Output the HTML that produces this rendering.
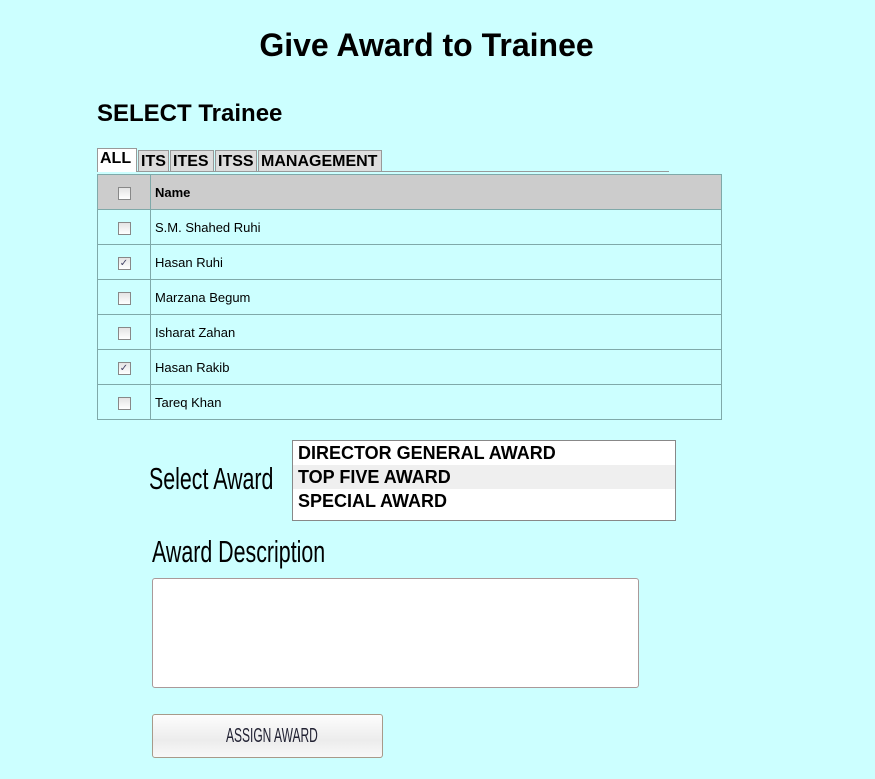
<!DOCTYPE html>
<html><head><style>
body{margin:0;background:#ccffff;font-family:"Liberation Sans",Arial,sans-serif;width:875px;height:779px;position:relative;overflow:hidden}
.abs{position:absolute}
h1{position:absolute;left:0;width:853px;text-align:center;top:27px;margin:0;font-size:32px;font-weight:bold}
h2{position:absolute;left:97px;top:100px;margin:0;font-size:24px}
.tabs{position:absolute;left:97px;top:148px;height:23px;width:572px;border-bottom:1px solid #999}
.tab{position:absolute;top:2px;height:21px;background:#ddd;border:1px solid #999;border-bottom:none;font-weight:bold;font-size:16px;line-height:21px;padding:0 2px;box-sizing:border-box;white-space:nowrap;overflow:hidden}
.tab.a{top:0;height:24px;background:#fff;font-size:16px;line-height:20px}
table{position:absolute;left:97px;top:174px;width:625px;border-collapse:collapse;font-size:13px}
td{border:1px solid #7fa9a9;height:34px;padding:0 0 0 4px}
td:first-child{width:52px;padding:0;text-align:center}
tr.h td{background:#cccccc;font-weight:bold}
.cb{display:inline-block;width:11px;height:11px;border:1px solid #888;background:linear-gradient(#e4e4e4,#fff);vertical-align:middle;font-size:10px;line-height:11px;color:#446;text-align:center}
.nar{font-family:"Liberation Sans Narrow","Liberation Sans",sans-serif;display:inline-block;transform-origin:left top;white-space:nowrap}
.list{position:absolute;left:292px;top:440px;width:384px;height:81px;box-sizing:border-box;border:1px solid #888;background:#fff;font-weight:bold;font-size:18px}
.list div{height:24px;line-height:24px;padding-left:5px}
textarea{position:absolute;left:152px;top:578px;width:487px;height:110px;box-sizing:border-box;border:1px solid #a99;border-radius:3px;background:#fff;margin:0;resize:none}
.btn{position:absolute;left:152px;top:714px;width:231px;height:44px;box-sizing:border-box;border:1px solid #a89a8a;border-radius:3px;background:linear-gradient(#fdfdfd,#ececec 60%,#f8f8f8)}
</style></head><body>
<h1>Give Award to Trainee</h1>
<h2>SELECT Trainee</h2>
<div class="tabs">
<div class="tab a" style="left:0;width:40px">ALL</div>
<div class="tab" style="left:41px;width:31px">ITS</div>
<div class="tab" style="left:73px;width:44px">ITES</div>
<div class="tab" style="left:118px;width:42px">ITSS</div>
<div class="tab" style="left:161px;width:124px">MANAGEMENT</div>
</div>
<table>
<tr class="h"><td><span class="cb"></span></td><td>Name</td></tr>
<tr><td><span class="cb"></span></td><td>S.M. Shahed Ruhi</td></tr>
<tr><td><span class="cb">✓</span></td><td>Hasan Ruhi</td></tr>
<tr><td><span class="cb"></span></td><td>Marzana Begum</td></tr>
<tr><td><span class="cb"></span></td><td>Isharat Zahan</td></tr>
<tr><td><span class="cb">✓</span></td><td>Hasan Rakib</td></tr>
<tr><td><span class="cb"></span></td><td>Tareq Khan</td></tr>
</table>
<div class="abs" style="left:149px;top:461px"><span class="nar" style="font-size:31px;transform:scaleX(0.69)">Select Award</span></div>
<div class="list"><div>DIRECTOR GENERAL AWARD</div><div style="background:#efefef">TOP FIVE AWARD</div><div>SPECIAL AWARD</div></div>
<div class="abs" style="left:152px;top:534px"><span class="nar" style="font-size:31px;transform:scaleX(0.69)">Award Description</span></div>
<textarea></textarea>
<div class="btn"><div class="abs" style="left:73px;top:10px"><span class="nar" style="font-size:20px;color:#223;transform:scaleX(0.6)">ASSIGN AWARD</span></div></div>
</body></html>
